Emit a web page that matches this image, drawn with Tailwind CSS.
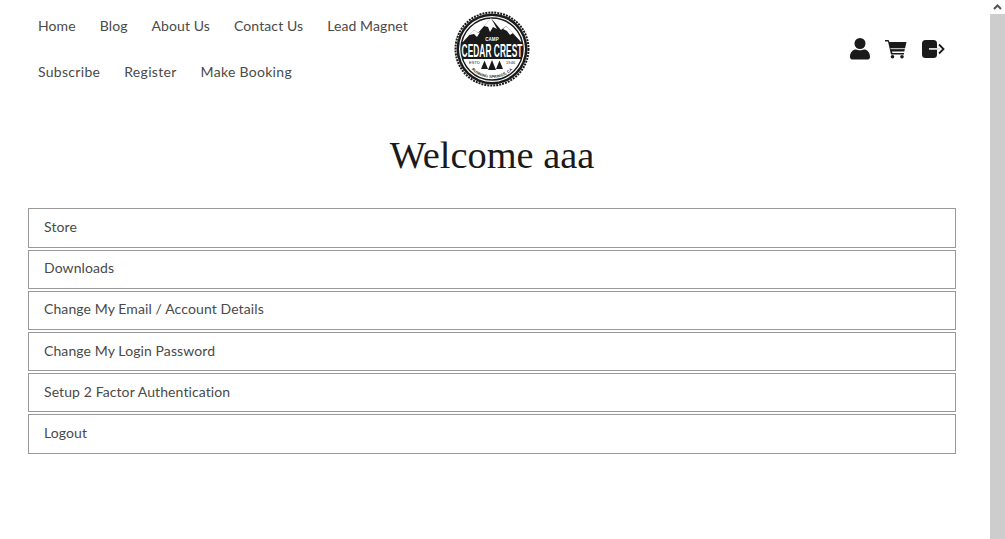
<!DOCTYPE html>
<html lang="en">
<head>
    <meta charset="UTF-8">
    <meta name="viewport" content="width=device-width, initial-scale=1.0">
    <title>Camp Cedar Crest - Account</title>
    <script src="https://cdn.jsdelivr.net/npm/@tailwindcss/browser@4"></script>
</head>
<body class="bg-white h-[539px] overflow-hidden flex font-['Lato',sans-serif] text-[14px] tracking-[0.1px] text-[#4a4a4a]">
    <div class="w-[990px] shrink-0">
        <!-- Header -->
        <header class="h-[100px] flex">
            <nav class="w-[416px] pl-[38px] shrink-0 whitespace-nowrap">
                <div class="h-[46px] pt-[5px] flex items-center gap-[24px]">
                    <a href="#">Home</a>
                    <a href="#">Blog</a>
                    <a href="#">About Us</a>
                    <a href="#">Contact Us</a>
                    <a href="#">Lead Magnet</a>
                </div>
                <div class="h-[46px] pt-[5px] flex items-center gap-[24px] tracking-[0.3px]">
                    <a href="#">Subscribe</a>
                    <a href="#">Register</a>
                    <a href="#">Make Booking</a>
                </div>
            </nav>
            <div class="w-[152px] shrink-0 flex justify-center pt-[10px]">
                <svg width="78" height="78" viewBox="0 0 78 78">
                    <clipPath id="inner"><circle cx="39" cy="39" r="31"/></clipPath>
                    <circle cx="39" cy="39" r="36.5" fill="#fff" stroke="#1a1a1a" stroke-width="2" stroke-dasharray="2 1"/>
                    <circle cx="39" cy="39" r="35.5" fill="#1a1a1a"/>
                    <circle cx="39" cy="39" r="33" fill="#fff"/>
                    <circle cx="39" cy="39" r="31" fill="none" stroke="#1a1a1a" stroke-width="1.5"/>
                    <g clip-path="url(#inner)">
                        <path d="M8 34 L21 20 L25 23 L38 8 L48 20 L53 16 L70 34 Z" fill="#1a1a1a"/>
                        <path d="M38 8 L31 16 L35 17 L37 22 L40 17 L44 19 Z M21 20 L16 25 L21 24 L24 27 L27 22 L25 23 Z M53 16 L50 19 L54 21 L57 25 L60 23 Z" fill="#fff"/>
                        <rect x="0" y="32" width="78" height="17" fill="#1a1a1a"/>
                    </g>
                    <text x="39" y="30.5" text-anchor="middle" fill="#fff" font-family="Liberation Sans, sans-serif" font-size="4.5" font-weight="700">CAMP</text>
                    <text transform="translate(39 46.5) scale(.44 1)" text-anchor="middle" fill="#fff" font-family="Liberation Sans, sans-serif" font-size="19" font-weight="700">CEDAR CREST</text>
                    <text x="16" y="54" fill="#1a1a1a" font-family="Liberation Sans, sans-serif" font-size="4">ESTD</text>
                    <text x="53" y="54" fill="#1a1a1a" font-family="Liberation Sans, sans-serif" font-size="4">1946</text>
                    <path d="M28 59 L31.5 50.5 L35 59 Z M35 60 L39 50 L43 60 Z M43 59 L46.5 50.5 L50 59 Z" fill="#1a1a1a"/>
                    <path id="arc" d="M10 39 A29 29 0 0 0 68 39" fill="none"/>
                    <text fill="#1a1a1a" font-family="Liberation Sans, sans-serif" font-size="3.8" font-weight="700"><textPath href="#arc" startOffset="50%" text-anchor="middle">RUNNING SPRINGS, CA</textPath></text>
                </svg>
            </div>
            <div class="flex-1 pl-[282px] pt-[38px] flex items-start text-[#1a1a1a]">
                <svg width="20" height="22" viewBox="0 0 20 22" class="shrink-0" fill="currentColor">
                    <circle cx="10" cy="5.5" r="5.5"/>
                    <path d="M0 19 C0 14 3 11.5 6 11.5 C8 12.6 12 12.6 14 11.5 C17 11.5 20 14 20 19 C20 20.5 19 21.5 18 21.5 H2 C1 21.5 0 20.5 0 19 Z"/>
                </svg>
                <svg width="22" height="20" viewBox="0 0 22 20" class="shrink-0 ml-[15px] mt-[1px]" fill="currentColor">
                    <path d="M0 1 H3.6 L4.4 3 H21.5 L19.3 12.5 H7 L7.4 14 H19 V15.6 H6 L3 2.6 H0 Z"/>
                    <rect x="5.5" y="9" width="14.5" height="1.2" fill="#bbb"/>
                    <circle cx="7.5" cy="17.8" r="1.8"/>
                    <circle cx="17" cy="17.8" r="1.8"/>
                </svg>
                <svg width="23" height="19" viewBox="0 0 23 19" class="shrink-0 ml-[15px] mt-[2px]" fill="currentColor">
                    <rect x="0" y="0" width="15" height="18" rx="3.5"/>
                    <path d="M7 8 H18 V9.8 H7 Z" fill="#ddd"/>
                    <path d="M17 4.5 L21.5 9 L17 13.5" fill="none" stroke="currentColor" stroke-width="1.8"/>
                </svg>
            </div>
        </header>

        <h1 class="mt-[27px] w-[984px] text-center text-[38.4px] leading-[56px] tracking-normal text-[#1a1a1a] font-['Liberation_Serif',serif]">Welcome aaa</h1>

        <!-- Account menu -->
        <ul class="mt-[25px] mx-[28px] w-[928px] flex flex-col gap-[2px]">
            <li class="h-[40px] pl-[15px] pb-[4px] flex items-center border border-[#999]"><a href="#">Store</a></li>
            <li class="h-[39px] pl-[15px] pb-[4px] flex items-center border border-[#999]"><a href="#">Downloads</a></li>
            <li class="h-[39px] pl-[15px] pb-[4px] flex items-center border border-[#999]"><a href="#">Change My Email / Account Details</a></li>
            <li class="h-[39px] pl-[15px] pb-[2px] flex items-center border border-[#999]"><a href="#">Change My Login Password</a></li>
            <li class="h-[39px] pl-[15px] pb-[2px] flex items-center border border-[#999]"><a href="#">Setup 2 Factor Authentication</a></li>
            <li class="h-[40px] pl-[15px] pb-[4px] flex items-center border border-[#999]"><a href="#">Logout</a></li>
        </ul>
    </div>

    <!-- Scrollbar -->
    <div class="w-[15px] shrink-0 bg-white flex flex-col">
        <div class="h-[14px] flex items-center justify-center">
            <svg width="9" height="6" viewBox="0 0 9 6"><path d="M1 5 L4.5 1.5 L8 5" fill="none" stroke="#555" stroke-width="2"/></svg>
        </div>
        <div class="flex-1 bg-[#cdcdcd]"></div>
    </div>
</body>
</html>
